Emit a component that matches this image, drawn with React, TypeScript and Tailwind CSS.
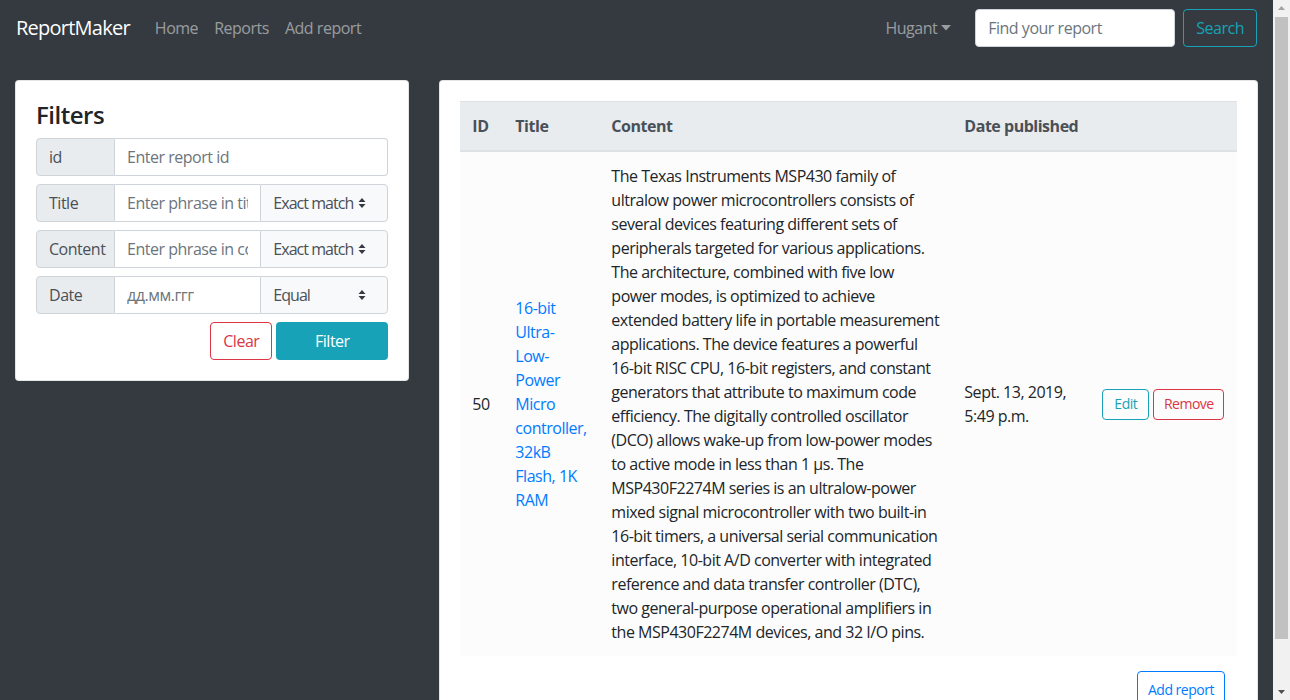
import React from 'react';

const contentLines = [
  'The Texas Instruments MSP430 family of',
  'ultralow power microcontrollers consists of',
  'several devices featuring different sets of',
  'peripherals targeted for various applications.',
  'The architecture, combined with five low',
  'power modes, is optimized to achieve',
  'extended battery life in portable measurement',
  'applications. The device features a powerful',
  '16-bit RISC CPU, 16-bit registers, and constant',
  'generators that attribute to maximum code',
  'efficiency. The digitally controlled oscillator',
  '(DCO) allows wake-up from low-power modes',
  'to active mode in less than 1 µs. The',
  'MSP430F2274M series is an ultralow-power',
  'mixed signal microcontroller with two built-in',
  '16-bit timers, a universal serial communication',
  'interface, 10-bit A/D converter with integrated',
  'reference and data transfer controller (DTC),',
  'two general-purpose operational amplifiers in',
  'the MSP430F2274M devices, and 32 I/O pins.',
];

const SelectArrows = () => (
  <svg width="8" height="12" viewBox="0 0 8 12" className="text-[#343a40] shrink-0">
    <path d="M4 1 L7.5 5 H0.5 Z" fill="currentColor" />
    <path d="M4 11 L7.5 7 H0.5 Z" fill="currentColor" />
  </svg>
);

const FilterRow = ({ label, placeholder, select }: { label: string; placeholder: string; select?: string }) => (
  <div className="flex h-[38px] mb-2 text-base">
    <div className="w-[79px] shrink-0 flex items-center px-3 bg-[#e9ecef] border border-[#ced4da] rounded-l text-[#495057]">
      {label}
    </div>
    <div
      className={
        'flex-1 min-w-0 flex items-center px-3 border-y border-[#ced4da] bg-white whitespace-nowrap text-[#6c757d] ' +
        (select ? '' : 'border-r rounded-r')
      }
    >
      <span className="overflow-hidden">{placeholder}</span>
    </div>
    {select && (
      <div className="w-[128px] shrink-0 flex items-center justify-between pl-3 pr-[21px] bg-[#f8f9fa] border border-[#ced4da] rounded-r text-[#495057]">
        <span className="tracking-[-0.06em] whitespace-nowrap">{select}</span>
        <SelectArrows />
      </div>
    )}
  </div>
);

// fake browser scrollbar on the right edge
const Scrollbar = () => (
  <div className="fixed top-0 right-0 w-[17px] h-[700px] bg-[#f1f1f1] flex flex-col items-center">
    <svg width="9" height="17" viewBox="0 0 9 17" className="shrink-0">
      <path d="M4.5 6 L8 10 H1 Z" fill="#a3a3a3" />
    </svg>
    <div className="w-[13px] h-[622px] bg-[#c1c1c1]" />
    <div className="flex-1" />
    <svg width="9" height="17" viewBox="0 0 9 17" className="shrink-0">
      <path d="M4.5 11 L8 7 H1 Z" fill="#505050" />
    </svg>
  </div>
);

export default function App() {
  return (
    <div
      className="min-h-screen bg-[#343a40] text-[#212529] tracking-[-0.03em]"
      style={{ fontFamily: '"Open Sans", "Noto Sans", sans-serif' }}
    >
      <div className="w-[1273px]">
        {/* Navbar */}
        <nav className="h-[56px] flex items-center px-4">
          <span className="text-xl text-white mr-[17px] tracking-[-0.038em]">ReportMaker</span>
          <div className="flex text-base text-white/50">
            <span className="px-2">Home</span>
            <span className="px-2">Reports</span>
            <span className="px-2">Add report</span>
          </div>
          <div className="ml-auto flex items-center">
            <span className="text-white/50 px-2 mr-4 flex items-center gap-1">
              Hugant
              <svg width="10" height="6" viewBox="0 0 10 6">
                <path d="M0 0 H10 L5 5.5 Z" fill="currentColor" />
              </svg>
            </span>
            <div className="w-[200px] h-[38px] bg-white border border-[#ced4da] rounded flex items-center px-3 text-[#6c757d]">
              Find your report
            </div>
            <button className="ml-2 h-[38px] px-3 border border-[#17a2b8] text-[#17a2b8] rounded">Search</button>
          </div>
        </nav>

        {/* Main */}
        <div className="flex mt-6 pb-10">
          <div className="w-1/3 px-[15px]">
            <div className="bg-white rounded border border-black/10 p-5">
              <h4 className="text-2xl font-semibold leading-[1.2] mb-2">Filters</h4>
              <FilterRow label="id" placeholder="Enter report id" />
              <FilterRow label="Title" placeholder="Enter phrase in title" select="Exact match" />
              <FilterRow label="Content" placeholder="Enter phrase in content" select="Exact match" />
              <FilterRow label="Date" placeholder="дд.мм.ггг" select="Equal" />
              <div className="flex justify-end gap-1">
                <button className="h-[38px] w-[62px] border border-[#dc3545] text-[#dc3545] rounded">Clear</button>
                <button className="h-[38px] w-[112px] bg-[#17a2b8] text-white rounded">Filter</button>
              </div>
            </div>
          </div>

          <div className="w-2/3 px-[15px]">
            <div className="bg-white rounded border border-black/10 p-5">
              <table className="w-full table-fixed border-collapse text-base">
                <thead>
                  <tr className="bg-[#e9ecef] text-[#495057] border-t border-b-2 border-[#dee2e6]">
                    <th className="p-3 text-left font-bold w-[43px]">ID</th>
                    <th className="p-3 text-left font-bold w-[96px]">Title</th>
                    <th className="p-3 text-left font-bold w-[353px]">Content</th>
                    <th className="p-3 text-left font-bold w-[138px] whitespace-nowrap">Date published</th>
                    <th className="p-3"></th>
                  </tr>
                </thead>
                <tbody>
                  <tr className="bg-[#fcfcfc] leading-6 align-middle border-t border-[#dee2e6]">
                    <td className="p-3">50</td>
                    <td className="p-3 text-[#007bff]">
                      16-bit Ultra-Low-Power Micro controller, 32kB Flash, 1K RAM
                    </td>
                    <td className="p-3">
                      {contentLines.map((l) => (
                        <div key={l} className="whitespace-nowrap">
                          {l}
                        </div>
                      ))}
                    </td>
                    <td className="p-3">
                      Sept. 13, 2019,
                      <br />
                      5:49 p.m.
                    </td>
                    <td className="p-3">
                      <div className="flex gap-1">
                        <button className="w-[47px] h-[31px] text-sm border border-[#17a2b8] text-[#17a2b8] rounded">Edit</button>
                        <button className="w-[71px] h-[31px] text-sm border border-[#dc3545] text-[#dc3545] rounded">Remove</button>
                      </div>
                    </td>
                  </tr>
                </tbody>
              </table>
              <div className="flex justify-end mt-[15px] pr-3">
                <button className="w-[88px] h-[38px] text-sm border border-[#007bff] text-[#007bff] rounded">Add report</button>
              </div>
            </div>
          </div>
        </div>
      </div>
      <Scrollbar />
    </div>
  );
}
